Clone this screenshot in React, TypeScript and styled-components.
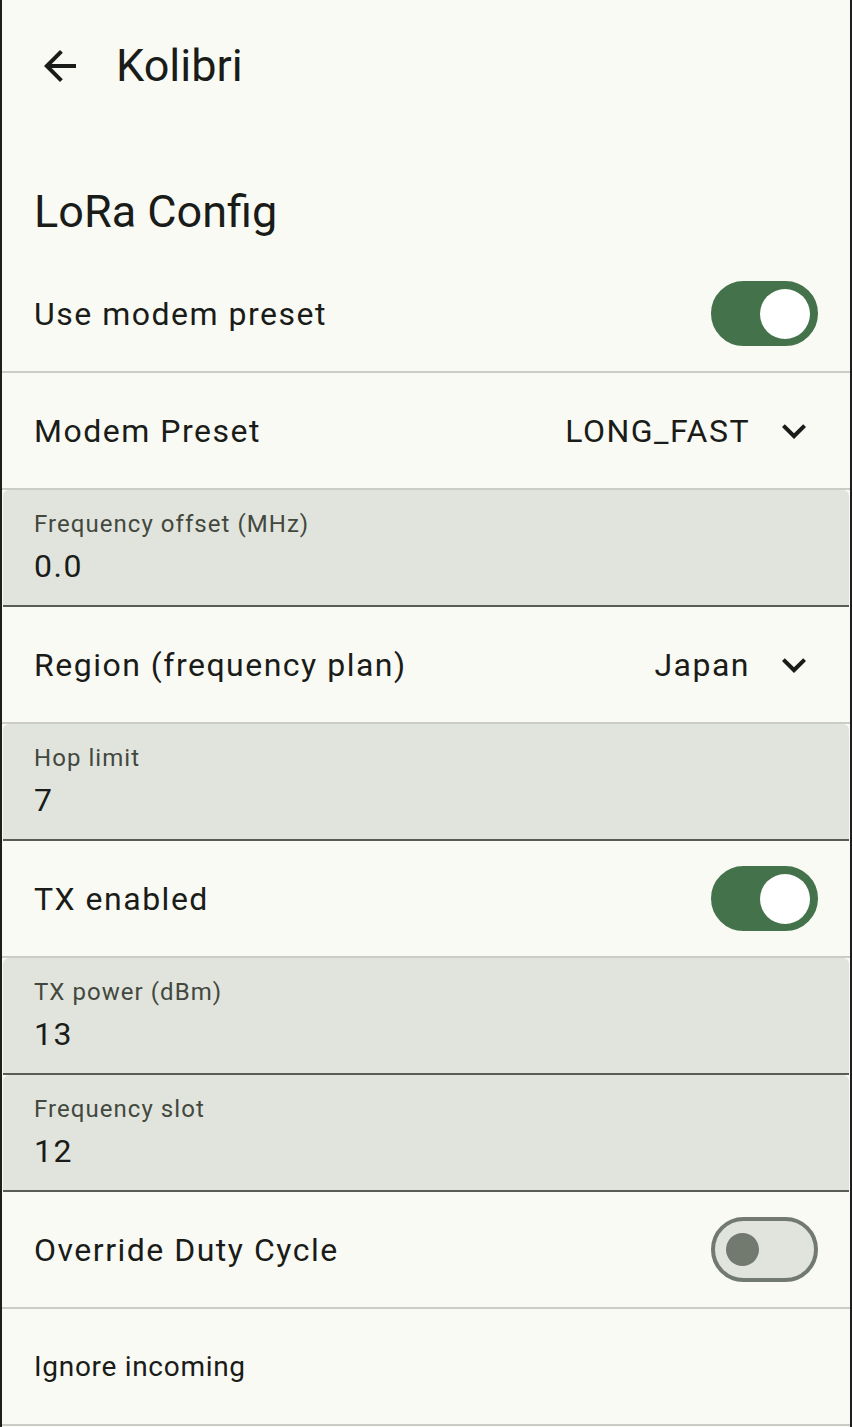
import type { FC } from "react";
import styled, { createGlobalStyle } from "styled-components";

type Item =
  | { kind: "switch"; label: string; on: boolean }
  | { kind: "dropdown"; label: string; value: string }
  | { kind: "field"; label: string; value: string }
  | { kind: "plain"; label: string };

const items: Item[] = [
  { kind: "switch", label: "Use modem preset", on: true },
  { kind: "dropdown", label: "Modem Preset", value: "LONG_FAST" },
  { kind: "field", label: "Frequency offset (MHz)", value: "0.0" },
  { kind: "dropdown", label: "Region (frequency plan)", value: "Japan" },
  { kind: "field", label: "Hop limit", value: "7" },
  { kind: "switch", label: "TX enabled", on: true },
  { kind: "field", label: "TX power (dBm)", value: "13" },
  { kind: "field", label: "Frequency slot", value: "12" },
  { kind: "switch", label: "Override Duty Cycle", on: false },
  { kind: "plain", label: "Ignore incoming" },
];

const ArrowBack: FC = () => (
  <svg width="48" height="48" viewBox="0 0 24 24" fill="#1a1c19">
    <path d="M20 11H7.83l5.59-5.59L12 4l-8 8 8 8 1.41-1.41L7.83 13H20v-2z" />
  </svg>
);

const ExpandMore: FC = () => (
  <svg width="48" height="48" viewBox="0 0 24 24" fill="#1a1c19">
    <path d="M16.59 8.59L12 13.17 7.41 8.59 6 10l6 6 6-6z" />
  </svg>
);

const App: FC = () => {
  return (
    <>
      <GlobalStyle />
      <Screen>
        <TopBar>
          <BackButton>
            <ArrowBack />
          </BackButton>
          <TopTitle>Kolibri</TopTitle>
        </TopBar>
        <SectionTitle>LoRa Config</SectionTitle>
        {items.map((item, i) => {
          if (item.kind === "field") {
            return (
              <Field key={i}>
                <FieldLabel>{item.label}</FieldLabel>
                <FieldValue>{item.value}</FieldValue>
              </Field>
            );
          }
          return (
            <Row key={i}>
              <RowLabel $small={item.kind === "plain"}>{item.label}</RowLabel>
              {item.kind === "switch" && (
                <Switch $on={item.on}>
                  <Thumb $on={item.on} />
                </Switch>
              )}
              {item.kind === "dropdown" && (
                <DropValue>
                  <span>{item.value}</span>
                  <ChevronBox>
                    <ExpandMore />
                  </ChevronBox>
                </DropValue>
              )}
            </Row>
          );
        })}
      </Screen>
    </>
  );
};

export default App;

const GlobalStyle = createGlobalStyle`
  html, body {
    margin: 0;
    padding: 0;
    background: #f9faf3;
  }
  body {
    font-family: Roboto, "Noto Sans", sans-serif;
    color: #1a1c19;
  }
`;

const Screen = styled.div`
  width: 852px;
  height: 1427px;
  box-sizing: border-box;
  overflow: hidden;
  background: #f9faf3;
  border-left: 2px solid #1e1f1d;
  border-right: 2px solid #1e1f1d;
  display: flex;
  flex-direction: column;
`;

const TopBar = styled.div`
  height: 128px;
  display: flex;
  align-items: center;
  padding-left: 34px;
  gap: 32px;
`;

const BackButton = styled.div`
  width: 48px;
  height: 48px;
  display: flex;
  align-items: center;
  justify-content: center;
  margin-top: 4px;
`;

const TopTitle = styled.div`
  font-size: 45px;
  line-height: 56px;
  margin-top: 3px;
`;

const SectionTitle = styled.div`
  height: 128px;
  box-sizing: border-box;
  padding: 52px 0 0 32px;
  font-size: 45px;
  line-height: 64px;
`;

const Row = styled.div`
  height: 117px;
  flex-shrink: 0;
  box-sizing: border-box;
  border-bottom: 2px solid #caccc5;
  display: flex;
  align-items: center;
  justify-content: space-between;
  padding: 0 32px 0 32px;
`;

const RowLabel = styled.span<{ $small: boolean }>`
  font-size: ${({ $small }) => ($small ? "28px" : "32px")};
  letter-spacing: ${({ $small }) => ($small ? "0.7px" : "1.5px")};
  line-height: 48px;
  margin-top: 1px;
`;

const DropValue = styled.div`
  display: flex;
  align-items: center;
  gap: 20px;
  font-size: 32px;
  letter-spacing: 1.5px;
  margin-top: 1px;
`;

const ChevronBox = styled.div`
  width: 48px;
  height: 48px;
  display: flex;
`;

const Switch = styled.div<{ $on: boolean }>`
  width: 107px;
  height: 65px;
  box-sizing: border-box;
  border-radius: 33px;
  background: ${({ $on }) => ($on ? "#44724a" : "#e1e4dc")};
  border: 4px solid ${({ $on }) => ($on ? "#44724a" : "#72796f")};
  display: flex;
  align-items: center;
  justify-content: ${({ $on }) => ($on ? "flex-end" : "flex-start")};
  padding: 0 ${({ $on }) => ($on ? "4px" : "11px")};
`;

const Thumb = styled.div<{ $on: boolean }>`
  width: ${({ $on }) => ($on ? "50px" : "33px")};
  height: ${({ $on }) => ($on ? "50px" : "33px")};
  border-radius: 50%;
  background: ${({ $on }) => ($on ? "#ffffff" : "#72796f")};
`;

const Field = styled.div`
  height: 117px;
  flex-shrink: 0;
  box-sizing: border-box;
  margin: 0 1px;
  background: #e1e4dc;
  border-radius: 6px 6px 0 0;
  border-bottom: 2px solid #575c55;
  padding: 18px 33px 0 31px;
  display: flex;
  flex-direction: column;
`;

const FieldLabel = styled.span`
  font-size: 24px;
  letter-spacing: 1.05px;
  line-height: 32px;
  color: #43483f;
`;

const FieldValue = styled.span`
  font-size: 32px;
  letter-spacing: 1.5px;
  line-height: 48px;
  margin-top: 2px;
`;
